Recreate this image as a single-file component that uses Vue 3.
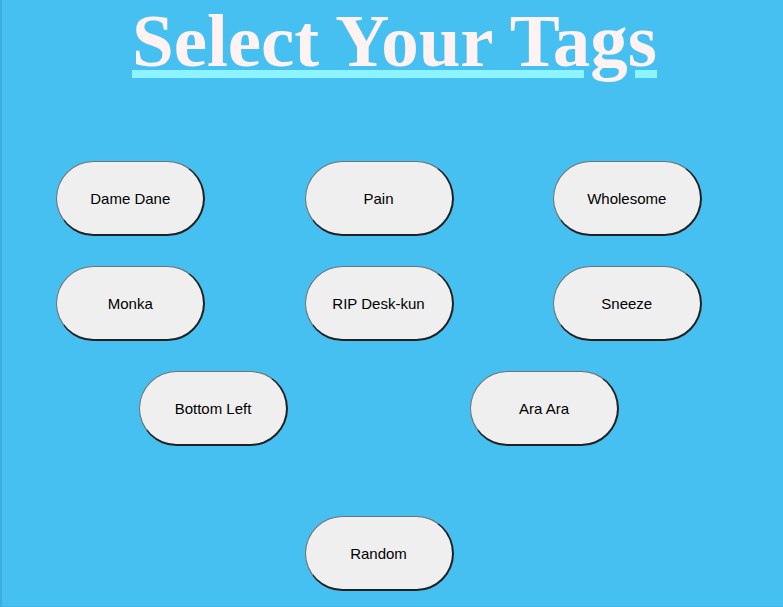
<script setup>
const rows = [
  ['Dame Dane', 'Pain', 'Wholesome'],
  ['Monka', 'RIP Desk-kun', 'Sneeze'],
  ['Bottom Left', 'Ara Ara'],
]
</script>

<template>
  <main class="page">
    <h1 class="title">Select Your Tags</h1>
    <div class="tags">
      <div v-for="(row, i) in rows" :key="i" class="row">
        <button v-for="tag in row" :key="tag" type="button" class="tag">{{ tag }}</button>
      </div>
    </div>
    <div class="row">
      <button type="button" class="tag">Random</button>
    </div>
  </main>
</template>

<style>
body {
  margin: 0;
  background: #46bff1;
}
</style>

<style scoped>
.page {
  box-sizing: border-box;
  min-height: 100vh;
  padding-bottom: 14px;
  border-left: 2px solid #3bade0;
  border-bottom: 1px solid #41b6ea;
  background: #46bff1;
}

.title {
  margin: 0 0 79px;
  padding-left: 4px;
  color: #fff2f2;
  font: bold 75px/82px "Liberation Serif", "Times New Roman", serif;
  text-align: center;
  text-decoration: underline 8px #8cf3ff;
}

.tags {
  display: flex;
  flex-direction: column;
  gap: 30px;
  margin-bottom: 70px;
}

.row {
  display: flex;
  justify-content: space-evenly;
  padding: 0 31px 0 4px;
}

.tag {
  box-sizing: border-box;
  width: 149px;
  height: 75px;
  margin: 0 49px;
  padding: 0;
  border: solid;
  border-width: 1px 2px 2px 1px;
  border-color: #6e7274 #212121 #212121 #6e7274;
  border-radius: 38px;
  background: #efefef;
  color: #000;
  font: 15px "Liberation Sans", Arial, sans-serif;
}
</style>
